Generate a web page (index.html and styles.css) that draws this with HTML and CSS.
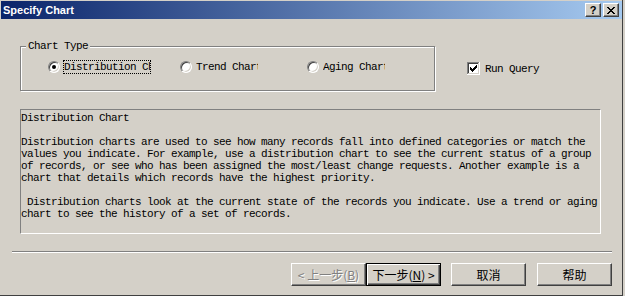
FILE: index.html
```html
<!DOCTYPE html>
<html lang="en">
<head>
  <meta charset="UTF-8" />
  <title>Specify Chart</title>
  <link rel="stylesheet" href="styles.css">
</head>
<body>

<div class="dialog">
  <div class="caption">
    <span class="caption-title">Specify Chart</span>
    <div class="caption-buttons">
      <button class="caption-btn">?</button>
      <button class="caption-btn">
        <svg width="8" height="7" viewBox="0 0 8 7" shape-rendering="crispEdges">
          <path fill="#000" d="M0 0h2v1h-2z M6 0h2v1h-2z M1 1h2v1h-2z M5 1h2v1h-2z M2 2h4v1h-4z M3 3h2v1h-2z M2 4h4v1h-4z M1 5h2v1h-2z M5 5h2v1h-2z M0 6h2v1h-2z M6 6h2v1h-2z"/>
        </svg>
      </button>
    </div>
  </div>

  <div class="top-row">
    <fieldset class="chart-type">
      <legend>Chart Type</legend>
      <div class="options">
        <label class="option">
          <span class="radio checked"></span>
          <span class="option-text focused wide">Distribution Chart</span>
        </label>
        <label class="option">
          <span class="radio"></span>
          <span class="option-text">Trend Chart</span>
        </label>
        <label class="option">
          <span class="radio"></span>
          <span class="option-text">Aging Chart</span>
        </label>
      </div>
    </fieldset>

    <label class="run-query">
      <svg class="checkbox" width="13" height="13" viewBox="0 0 13 13" shape-rendering="crispEdges">
        <path fill="#808080" d="M0 0h12v1H1v11H0z"/>
        <path fill="#404040" d="M1 1h10v1H2v9H1z"/>
        <path fill="#fff" d="M12 0h1v13H0v-1h12z"/>
        <path fill="#d4d0c8" d="M11 1h1v11H1v-1h10z"/>
        <rect x="2" y="2" width="9" height="9" fill="#fff"/>
        <path fill="#000" d="M3 5h1v3h-1z M4 6h1v3h-1z M5 7h1v3h-1z M6 6h1v3h-1z M7 5h1v3h-1z M8 4h1v3h-1z M9 3h1v3h-1z"/>
      </svg>
      <span>Run Query</span>
    </label>
  </div>

  <div class="description">Distribution Chart

Distribution charts are used to see how many records fall into defined categories or match the
values you indicate. For example, use a distribution chart to see the current status of a group
of records, or see who has been assigned the most/least change requests. Another example is a
chart that details which records have the highest priority.

 Distribution charts look at the current state of the records you indicate. Use a trend or aging
chart to see the history of a set of records.</div>

  <div class="separator"></div>

  <div class="buttons">
    <button class="btn disabled">&lt; 上一步(<u>B</u>)</button>
    <button class="btn default">下一步(<u>N</u>) &gt;</button>
    <button class="btn cancel">取消</button>
    <button class="btn help">帮助</button>
  </div>
</div>

</body>
</html>
```

FILE: styles.css
```css
body {
  margin: 0;
  background: #d4d0c8;
}

.dialog {
  width: 623px;
  height: 296px;
  box-sizing: border-box;
  padding: 1px 0 0 1px;
  border-right: 1px solid #404040;
  border-bottom: 1px solid #404040;
  background: #d4d0c8;
  color: #000;
  font-family: "Liberation Mono", monospace;
  font-size: 11px;
  line-height: 12px;
  letter-spacing: -0.6px;
}

/* title bar */
.caption {
  height: 18px;
  display: flex;
  align-items: center;
  justify-content: space-between;
  padding: 0 3px 0 2px;
  background: linear-gradient(to right, #0a246a, #a6caf0);
}

.caption-title {
  color: #fff;
  font: bold 11px "Liberation Sans", sans-serif;
  letter-spacing: 0;
}

.caption-buttons {
  display: flex;
  gap: 2px;
}

.caption-btn {
  width: 16px;
  height: 14px;
  box-sizing: border-box;
  padding: 0;
  border: 1px solid;
  border-color: #fff #404040 #404040 #fff;
  box-shadow: inset -1px -1px 0 #808080;
  background: #d4d0c8;
  display: flex;
  align-items: center;
  justify-content: center;
  color: #000;
  font: bold 11px "Liberation Sans", sans-serif;
  line-height: 1;
}

/* chart type group + run query */
.top-row {
  display: flex;
  margin-top: 22px;
  padding-left: 19px;
}

.chart-type {
  margin: 0;
  width: 415px;
  box-sizing: border-box;
  padding: 8px 0 16px 0;
  border: 1px solid #808080;
  box-shadow: inset 1px 1px 0 #fff, 1px 1px 0 #fff;
  min-inline-size: auto;
}

.chart-type legend {
  margin-left: 5px;
  padding: 0 2px;
  line-height: 11px;
  background: #d4d0c8;
}

.options {
  display: grid;
  grid-template-columns: 132px 127px 1fr;
  padding-left: 27px;
}

.option {
  display: flex;
  align-items: center;
  gap: 3px;
}

.radio {
  position: relative;
  flex: none;
  width: 12px;
  height: 12px;
  box-sizing: border-box;
  border-radius: 50%;
  border: 1px solid;
  border-color: #808080 #fff #fff #808080;
  box-shadow: inset 1px 1px 0 #404040, inset -1px -1px 0 #d4d0c8;
  background: #fff;
}

.radio.checked::after {
  content: "";
  position: absolute;
  left: 3px;
  top: 3px;
  width: 4px;
  height: 4px;
  border-radius: 50%;
  background: #000;
}

.option-text {
  display: block;
  width: 62px;
  border: 1px solid transparent;
  overflow: hidden;
  white-space: nowrap;
}

.option-text.wide {
  width: 86px;
}

.option-text.focused {
  border: 1px dotted #000;
}

.run-query {
  align-self: flex-start;
  display: flex;
  align-items: center;
  gap: 5px;
  height: 13px;
  margin: 21px 0 0 32px;
}

.checkbox {
  display: block;
  flex: none;
}

/* description */
.description {
  margin: 18px 0 0 19px;
  width: 581px;
  height: 125px;
  box-sizing: border-box;
  padding-top: 2px;
  border: 1px solid;
  border-color: #808080 #fff #fff #808080;
  white-space: pre-wrap;
}

.separator {
  margin: 17px 0 0 11px;
  width: 600px;
  border-top: 1px solid #808080;
  border-bottom: 1px solid #fff;
}

/* wizard buttons */
.buttons {
  display: flex;
  justify-content: flex-end;
  margin-top: 10px;
  padding-right: 10px;
}

.btn {
  width: 75px;
  height: 23px;
  box-sizing: border-box;
  padding: 0;
  border: 1px solid;
  border-color: #fff #404040 #404040 #fff;
  box-shadow: inset -1px -1px 0 #808080;
  background: #d4d0c8;
  color: #000;
  font: 12px "Noto Sans CJK SC", sans-serif;
  line-height: 1;
  letter-spacing: 0;
  display: flex;
  align-items: center;
  justify-content: center;
}

.btn.default {
  border-color: #000;
  box-shadow: inset 1px 1px 0 #fff, inset -1px -1px 0 #404040, inset -2px -2px 0 #808080;
}

.btn.disabled {
  color: #808080;
  text-shadow: 1px 1px 0 #fff;
}

.btn.cancel {
  margin-left: 10px;
}

.btn.help {
  margin-left: 11px;
}
```
